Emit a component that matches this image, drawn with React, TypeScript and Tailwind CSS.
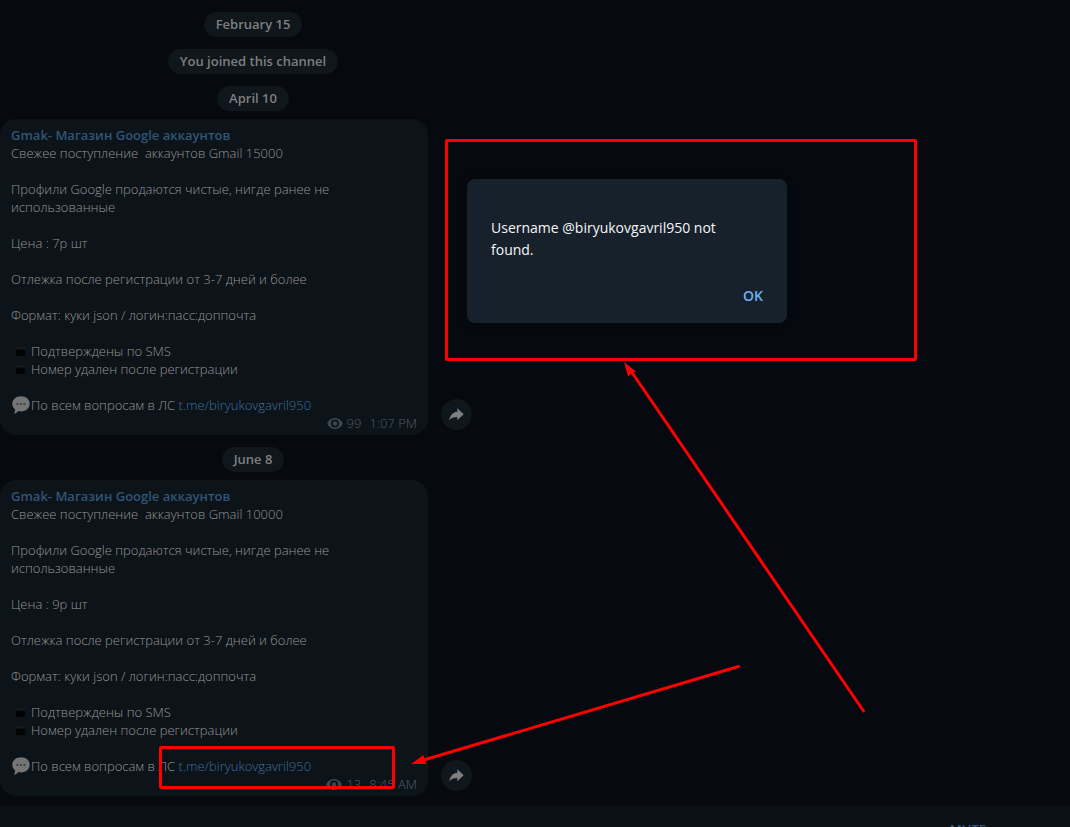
import type { ReactNode } from 'react';

interface Post {
  id: number;
  title: string;
  price: string;
  views: number;
  time: string;
}

const CHANNEL_NAME = 'Gmak- Магазин Google аккаунтов';
const CONTACT = 'biryukovgavril950';

const POSTS: Record<'april' | 'june', Post> = {
  april: { id: 1, title: 'Свежее поступление  аккаунтов Gmail 15000', price: 'Цена : 7р шт', views: 99, time: '1:07 PM' },
  june: { id: 2, title: 'Свежее поступление  аккаунтов Gmail 10000', price: 'Цена : 9р шт', views: 13, time: '8:45 AM' },
};

const ServicePill = ({ children }: { children: ReactNode }) => (
  <div className="h-[25px] rounded-full bg-[#0f161c] px-3 text-[13px] leading-[25px] font-semibold text-[#7f7f7f]">
    {children}
  </div>
);

const BlackSquare = () => (
  <svg className="mr-[6px] ml-[5px] size-[9px] shrink-0" viewBox="0 0 9 9" aria-hidden="true">
    <rect width="9" height="9" fill="#020303" />
    <rect width="9" height="3" fill="#181a1a" />
    <rect y="2" width="9" height="1" fill="#0e0f10" />
  </svg>
);

const SpeechBalloon = () => (
  <svg className="mr-px ml-px size-[18px] shrink-0" viewBox="0 0 18 18" aria-hidden="true">
    <path
      d="M9 0.3C4 0.3 0.3 3.500 0.3 7.700c0 2.500 1.100 4.400 2.800 5.700C3 15 2.700 16.600 1.800 17.800c2-.2 3.500-1.300 4.500-2.700.9.200 1.700.3 2.700.3 5 0 8.700-3.400 8.700-7.700S14 .3 9 .3z"
      fill="#757575"
    />
    <rect x="4.500" y="7" width="2" height="2" fill="#454545" />
    <rect x="8" y="7" width="2" height="2" fill="#454545" />
    <rect x="11.500" y="7" width="2" height="2" fill="#454545" />
  </svg>
);

const EyeIcon = () => (
  <svg className="h-[11px] w-[16px]" viewBox="0 0 16 11" aria-hidden="true">
    <path
      fillRule="evenodd"
      fill="#3c4650"
      d="M8 0C4.400 0 1.400 2.300.2 5.500 1.400 8.700 4.400 11 8 11s6.600-2.300 7.800-5.500C14.600 2.300 11.600 0 8 0zm0 1.500a4 4 0 1 1 0 8 4 4 0 0 1 0-8zm0 1.700a2.300 2.300 0 1 0 0 4.600 2.300 2.300 0 0 0 0-4.600z"
    />
  </svg>
);

const ShareButton = () => (
  <button
    aria-label="Share"
    className="mb-[5px] flex size-[31px] shrink-0 items-center justify-center rounded-full bg-[#0f161c]"
  >
    <svg className="h-[13px] w-[15px]" viewBox="0 0 15 13" aria-hidden="true">
      <path d="M8.300 0.300L14.700 6.300L8.300 12.300V8.900C4.600 8.900 2.200 9.900.3 12.200.9 8.200 3.200 4.400 8.300 3.800z" fill="#7f7f7f" />
    </svg>
  </button>
);

const PostRow = ({ post }: { post: Post }) => (
  <div className="flex w-full items-end gap-[13px]">
    <article className="w-[428px] rounded-2xl bg-[#0c1319] px-[11px] pt-[7px] pb-[3px] text-[13px] leading-[18px] text-[#969696]">
      <h2 className="font-semibold text-[#315577]">{CHANNEL_NAME}</h2>
      <div className="space-y-[18px] font-light">
        <p className="whitespace-pre-wrap">{post.title}</p>
        <p>Профили Google продаются чистые, нигде ранее не использованные</p>
        <p>{post.price}</p>
        <p>Отлежка после регистрации от 3-7 дней и более</p>
        <p>Формат: куки json / логин:пасс:доппочта</p>
        <ul>
          <li className="flex items-center"><BlackSquare />Подтверждены по SMS</li>
          <li className="flex items-center"><BlackSquare />Номер удален после регистрации</li>
        </ul>
        <p className="flex items-center">
          <SpeechBalloon />
          <span>
            По всем вопросам в ЛС{' '}
            <a href={`https://t.me/${CONTACT}`} className="text-[#3f709c]">{`t.me/${CONTACT}`}</a>
          </span>
        </p>
      </div>
      <div className="flex items-center justify-end font-light text-[#525c66]">
        <EyeIcon />
        <span className="ml-1">{post.views}</span>
        <time className="ml-2">{post.time}</time>
      </div>
    </article>
    <ShareButton />
  </div>
);

/** Red frames and arrows drawn on top of the chat */
const Annotations = () => (
  <div className="pointer-events-none absolute inset-0">
    <div className="absolute top-[139px] left-[445px] h-[222px] w-[472px] rounded-[2px] border-3 border-[#ff0000]" />
    <div className="absolute top-[746px] left-[159px] h-[43px] w-[236px] rounded-[2px] border-3 border-[#ff0000]" />
    <svg className="absolute top-0 left-0 h-[827px] w-[1070px]" viewBox="0 0 1070 827" aria-hidden="true">
      <g stroke="#ff0000" strokeWidth="3" strokeLinecap="round">
        <path d="M863.500 711L631 371" />
        <path d="M738.500 666.500L422 760.500" />
      </g>
      <g fill="#ff0000">
        <path d="M624 362L628 376.500L632 373L636 371.500Z" />
        <path d="M411 764L423.500 755L424.500 760L426.500 764Z" />
      </g>
    </svg>
  </div>
);

export default function App() {
  return (
    <div className="relative flex h-screen flex-col overflow-hidden bg-[#060a10] font-['Open_Sans',sans-serif]">
      <main className="flex w-full max-w-[506px] shrink-0 flex-col items-center pt-3 pb-[10px]">
        <div className="mb-2 flex flex-col items-center gap-3">
          <ServicePill>February 15</ServicePill>
          <ServicePill>You joined this channel</ServicePill>
          <ServicePill>April 10</ServicePill>
        </div>
        <PostRow post={POSTS.april} />
        <div className="mt-3 mb-2">
          <ServicePill>June 8</ServicePill>
        </div>
        <PostRow post={POSTS.june} />
      </main>

      <footer className="flex shrink-0 justify-end bg-[#0b1014] pt-[14px] pr-[84px]">
        <button className="text-[13px] leading-[18px] font-semibold text-[#315577]">MUTE</button>
      </footer>

      <div
        role="dialog"
        className="absolute top-[179px] left-[467px] w-80 rounded-lg bg-[#17212b] px-6 pt-[38px] pb-4 shadow-[0_1px_6px_1px_#05070a]"
      >
        <p className="max-w-[240px] text-sm leading-[22px] text-[#f5f5f5]">{`Username @${CONTACT} not found.`}</p>
        <div className="mt-6 flex justify-end">
          <button className="text-sm leading-[22px] font-semibold text-[#6ab3f3]">OK</button>
        </div>
      </div>

      <Annotations />
    </div>
  );
}
